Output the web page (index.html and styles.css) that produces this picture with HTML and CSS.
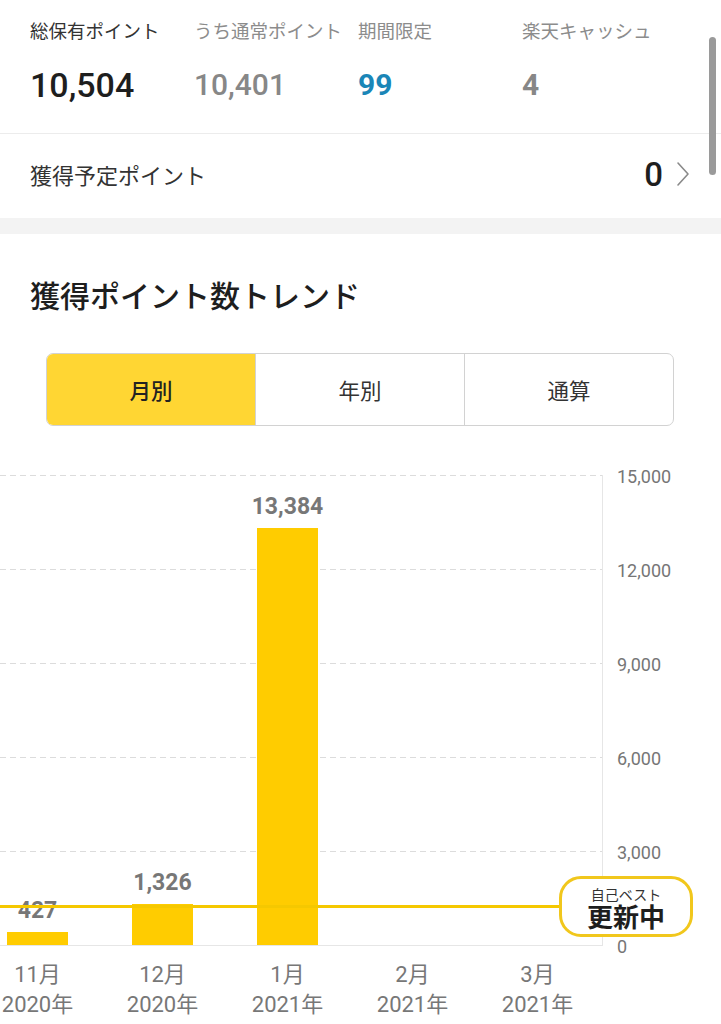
FILE: index.html
```html
<!DOCTYPE html>
<html lang="ja">
<head>
<meta charset="utf-8">
<title>獲得ポイント数トレンド</title>
<link rel="stylesheet" href="styles.css">
</head>
<body>
<div class="page">
  <section class="summary">
    <div class="stats">
      <div class="stat">
        <div class="label label-dark">総保有ポイント</div>
        <div class="val val-total">10,504</div>
      </div>
      <div class="stat">
        <div class="label">うち通常ポイント</div>
        <div class="val val-gray">10,401</div>
      </div>
      <div class="stat">
        <div class="label">期間限定</div>
        <div class="val val-blue">99</div>
      </div>
      <div class="stat">
        <div class="label">楽天キャッシュ</div>
        <div class="val val-gray val-strong">4</div>
      </div>
    </div>
    <div class="pending">
      <span class="pending-label">獲得予定ポイント</span>
      <span class="pending-val">0<svg class="chev" width="14" height="26" viewBox="0 0 14 26"><path d="M2 2 L12 13 L2 24" fill="none" stroke="#8a8a8a" stroke-width="1.6" stroke-linecap="round" stroke-linejoin="round"/></svg></span>
    </div>
  </section>
  <div class="band"></div>
  <section class="trend">
    <h2 class="title">獲得ポイント数トレンド</h2>
    <div class="seg">
      <div class="seg-item seg-active">月別</div>
      <div class="seg-item">年別</div>
      <div class="seg-item">通算</div>
    </div>
    <div class="chart">
      <div class="plot-row">
        <div class="plot">
          <div class="grid">
            <div class="gline"></div>
            <div class="gline"></div>
            <div class="gline"></div>
            <div class="gline"></div>
            <div class="gline"></div>
          </div>
          <div class="bars">
            <div class="slot"><span class="blabel">427</span><div class="bar" style="height:13px"></div></div>
            <div class="slot"><span class="blabel">1,326</span><div class="bar" style="height:41px"></div></div>
            <div class="slot"><span class="blabel">13,384</span><div class="bar" style="height:417px"></div></div>
            <div class="slot"></div>
            <div class="slot"></div>
          </div>
          <div class="best-line"></div>
        </div>
        <div class="yaxis">
          <span>15,000</span>
          <span>12,000</span>
          <span>9,000</span>
          <span>6,000</span>
          <span>3,000</span>
          <span>0</span>
        </div>
      </div>
      <div class="xaxis">
        <div class="xslot">11月<br>2020年</div>
        <div class="xslot">12月<br>2020年</div>
        <div class="xslot">1月<br>2021年</div>
        <div class="xslot">2月<br>2021年</div>
        <div class="xslot">3月<br>2021年</div>
      </div>
      <div class="badge">
        <span class="badge-small">自己ベスト</span>
        <span class="badge-big">更新中</span>
      </div>
    </div>
  </section>
  <div class="scrollbar"></div>
</div>
</body>
</html>
```

FILE: styles.css
```css
* { box-sizing: border-box; }
html, body { margin: 0; padding: 0; background: #fff; }
body {
  font-family: "Noto Sans CJK JP", "Noto Sans", sans-serif;
  color: #222;
  overflow: hidden;
}
.page { position: relative; width: 721px; height: 1024px; overflow: hidden; }

.stats {
  display: grid;
  grid-template-columns: 164px 164px 164px 164px;
  padding: 18px 0 28px 30px;
  border-bottom: 1px solid #ececec;
}
.label {
  font-size: 18.5px;
  line-height: 24px;
  color: #8c8c8c;
  white-space: nowrap;
}
.label-dark { color: #333; }
.val {
  margin-top: 23px;
  line-height: 40px;
  font-family: "Roboto", "Noto Sans", sans-serif;
  font-weight: 500;
  font-size: 30px;
}
.val-total { font-size: 34px; color: #1e1e1e; }
.val-gray { color: #878787; }
.val-blue { color: #1a86b7; font-weight: 700; }
.val-strong { font-weight: 700; }

.pending {
  height: 84px;
  display: flex;
  align-items: center;
  justify-content: space-between;
  padding: 0 31px 4px 30px;
}
.pending-label { font-size: 22px; color: #333; }
.pending-val {
  display: flex;
  align-items: center;
  font-family: "Roboto", sans-serif;
  font-weight: 500;
  font-size: 33px;
  color: #1e1e1e;
}
.chev { margin-left: 13px; }

.band { height: 16px; background: #f3f3f3; }

.trend { padding-top: 40px; }
.title {
  margin: 0 0 0 30px;
  font-size: 30px;
  line-height: 40px;
  font-weight: 500;
  color: #1e1e1e;
}
.seg {
  margin: 39px 0 0 46px;
  width: 628px;
  height: 73px;
  display: flex;
  border: 1.5px solid #d2d2d2;
  border-radius: 7px;
  overflow: hidden;
}
.seg-item {
  flex: 1;
  display: flex;
  align-items: center;
  justify-content: center;
  font-size: 21.5px;
  color: #333;
}
.seg-item + .seg-item { border-left: 1.5px solid #d2d2d2; }
.seg-active { background: #ffd633; font-weight: 500; color: #222; }

.chart { position: relative; margin-top: 49px; }
.plot-row { display: flex; height: 470px; }
.plot {
  position: relative;
  width: 603px;
  height: 471px;
  border-right: 1px solid #e6e6e6;
  border-bottom: 1px solid #e6e6e6;
}
.grid { display: flex; flex-direction: column; }
.gline {
  height: 94px;
  background: repeating-linear-gradient(to right, #dcdcdc 0 6px, transparent 6px 10px) top / 100% 1px no-repeat;
}
.bars {
  position: absolute;
  left: -25px;
  top: 0;
  bottom: 0;
  display: flex;
  align-items: flex-end;
}
.slot {
  width: 125px;
  display: flex;
  flex-direction: column;
  align-items: center;
}
.bar { width: 61px; background: #ffcc00; }
.blabel {
  font-family: "Roboto", sans-serif;
  font-weight: 700;
  font-size: 23px;
  line-height: 24px;
  color: #777;
  margin-bottom: 9px;
}
.best-line {
  position: absolute;
  left: 0;
  right: 0;
  bottom: 37px;
  height: 3px;
  background: #f5c800;
}
.yaxis {
  display: flex;
  flex-direction: column;
  gap: 74px;
  margin-top: -8px;
  padding-left: 14px;
}
.yaxis span {
  height: 20px;
  line-height: 20px;
  font-family: "Roboto", sans-serif;
  font-size: 18px;
  color: #767676;
}
.xaxis {
  display: flex;
  margin-left: -25px;
  padding-top: 15px;
}
.xslot {
  width: 125px;
  text-align: center;
  font-family: "Roboto", "Noto Sans CJK JP", sans-serif;
  font-size: 22px;
  line-height: 30px;
  color: #777;
}
.badge {
  position: absolute;
  left: 559px;
  top: 401px;
  width: 134px;
  height: 61px;
  border: 3px solid #f1c71c;
  border-radius: 22px;
  background: #fff;
  display: flex;
  flex-direction: column;
  align-items: center;
  justify-content: center;
  padding-top: 2px;
}
.badge-small { font-size: 14px; line-height: 16px; color: #333; }
.badge-big { font-size: 26px; line-height: 28px; font-weight: 700; color: #1e1e1e; }

.scrollbar {
  position: absolute;
  left: 709px;
  top: 37px;
  width: 7px;
  height: 138px;
  border-radius: 4px;
  background: #9a9a9a;
}
```
